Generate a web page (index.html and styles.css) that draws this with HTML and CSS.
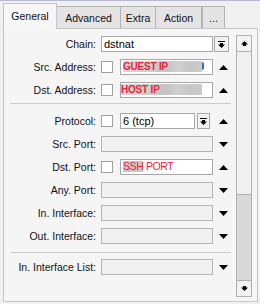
FILE: index.html
```html
<!DOCTYPE html>
<html lang="en">
<head>
<meta charset="UTF-8">
<meta name="viewport" content="width=device-width, initial-scale=1.0">
<title>NAT Rule</title>
<link rel="stylesheet" href="styles.css">
</head>
<body>
<div class="window">
    <div class="tabs">
        <div class="tab tab-general active">General</div>
        <div class="tab tab-advanced">Advanced</div>
        <div class="tab tab-extra">Extra</div>
        <div class="tab tab-action">Action</div>
        <div class="tab tab-more">...</div>
    </div>

    <div class="panel">
        <div class="form">
            <div class="row">
                <span class="label">Chain:</span>
                <div class="ctrl">
                    <div class="field">dstnat</div>
                </div>
                <div class="slot slot-btn">
                    <div class="drop-btn drop-wide">
                        <svg width="7" height="7" viewBox="0 0 7 7"><rect x="0" y="0" width="7" height="1"/><path d="M2 2h3v1.5h2L3.5 7 0 3.5h2z"/></svg>
                    </div>
                </div>
            </div>

            <div class="row">
                <span class="label">Src. Address:</span>
                <div class="ctrl">
                    <span class="check"></span>
                    <div class="field field-mask">
                        <span class="blur blur-guest">GUEST IP</span><span class="tail"></span>
                    </div>
                </div>
                <div class="slot"><svg class="tri" width="9" height="5" viewBox="0 0 9 5"><path d="M0 5L4.5 0 9 5z"/></svg></div>
            </div>

            <div class="row">
                <span class="label">Dst. Address:</span>
                <div class="ctrl">
                    <span class="check"></span>
                    <div class="field field-mask field-flush">
                        <span class="blur blur-host">HOST IP</span>
                    </div>
                </div>
                <div class="slot"><svg class="tri" width="9" height="5" viewBox="0 0 9 5"><path d="M0 5L4.5 0 9 5z"/></svg></div>
            </div>

            <div class="sep"></div>

            <div class="row">
                <span class="label">Protocol:</span>
                <div class="ctrl">
                    <span class="check"></span>
                    <div class="field">6 (tcp)</div>
                    <div class="drop-btn drop-small">
                        <svg width="7" height="7" viewBox="0 0 7 7"><rect x="0" y="0" width="7" height="1"/><path d="M2 2h3v1.5h2L3.5 7 0 3.5h2z"/></svg>
                    </div>
                </div>
                <div class="slot"><svg class="tri" width="9" height="5" viewBox="0 0 9 5"><path d="M0 5L4.5 0 9 5z"/></svg></div>
            </div>

            <div class="row">
                <span class="label">Src. Port:</span>
                <div class="ctrl">
                    <div class="field disabled"></div>
                </div>
                <div class="slot"><svg class="tri" width="9" height="5" viewBox="0 0 9 5"><path d="M0 0h9L4.5 5z"/></svg></div>
            </div>

            <div class="row">
                <span class="label">Dst. Port:</span>
                <div class="ctrl">
                    <span class="check"></span>
                    <div class="field field-mask">
                        <span class="port"><span class="port-hide">SSH</span> PORT</span>
                    </div>
                </div>
                <div class="slot"><svg class="tri" width="9" height="5" viewBox="0 0 9 5"><path d="M0 5L4.5 0 9 5z"/></svg></div>
            </div>

            <div class="row">
                <span class="label">Any. Port:</span>
                <div class="ctrl">
                    <div class="field disabled"></div>
                </div>
                <div class="slot"><svg class="tri" width="9" height="5" viewBox="0 0 9 5"><path d="M0 0h9L4.5 5z"/></svg></div>
            </div>

            <div class="row">
                <span class="label">In. Interface:</span>
                <div class="ctrl">
                    <div class="field disabled"></div>
                </div>
                <div class="slot"><svg class="tri" width="9" height="5" viewBox="0 0 9 5"><path d="M0 0h9L4.5 5z"/></svg></div>
            </div>

            <div class="row">
                <span class="label">Out. Interface:</span>
                <div class="ctrl">
                    <div class="field disabled"></div>
                </div>
                <div class="slot"><svg class="tri" width="9" height="5" viewBox="0 0 9 5"><path d="M0 0h9L4.5 5z"/></svg></div>
            </div>

            <div class="sep sep-low"></div>

            <div class="row">
                <span class="label">In. Interface List:</span>
                <div class="ctrl">
                    <div class="field disabled"></div>
                </div>
                <div class="slot"><svg class="tri" width="9" height="5" viewBox="0 0 9 5"><path d="M0 0h9L4.5 5z"/></svg></div>
            </div>
        </div>

        <div class="scrollbar">
            <div class="sb-btn sb-up">
                <svg width="7" height="5" viewBox="0 0 7 5"><path d="M3.5 0L7 3.5H5V5H2V3.5H0z"/></svg>
            </div>
            <div class="sb-thumb"></div>
            <div class="sb-track"></div>
            <div class="sb-btn sb-down">
                <svg width="7" height="5" viewBox="0 0 7 5"><path d="M2 0h3v1.5h2L3.5 5 0 1.5h2z"/></svg>
            </div>
        </div>
    </div>
</div>
</body>
</html>
```

FILE: styles.css
```css
body {
    margin: 0;
    padding: 0;
    background-color: #f0f0f0;
    font-family: "Liberation Sans", Arial, sans-serif;
    font-size: 10.5px;
    color: #111118;
}
.window {
    height: 304px;
    box-sizing: border-box;
    border-top: 1px solid #b6b8d4;
    overflow: hidden;
}

/* tab strip */
.tabs {
    display: flex;
    align-items: flex-end;
    margin-top: 2px;
    padding-left: 3px;
}
.tab {
    box-sizing: border-box;
    height: 22px;
    padding-top: 5px;
    line-height: 13px;
    text-align: center;
    background-color: #e4e4e4;
    border: 1px solid #b4b4b4;
    border-bottom: none;
    margin-left: -1px;
}
.tab.active {
    position: relative;
    z-index: 1;
    height: 26px;
    padding-top: 6px;
    margin-bottom: -1px;
    margin-left: 0;
    background-color: #f7f7f7;
    border-color: #c4c4c4;
}
.tab-general { width: 54px; }
.tab-advanced { width: 65px; }
.tab-extra { width: 36px; }
.tab-action { width: 47px; }
.tab-more { width: 23px; margin-left: 0; }

/* panel */
.panel {
    display: flex;
    align-items: flex-start;
    box-sizing: border-box;
    height: 274px;
    margin: 0 2px 0 3px;
    padding-right: 5px;
    background-color: #f5f5f5;
    border: 1px solid #c8c8c8;
}
.form {
    flex: 0 0 232px;
    display: flex;
    flex-direction: column;
    gap: 7px;
    padding-top: 7px;
}
.row {
    display: flex;
    align-items: center;
    height: 16px;
}
.label {
    flex: 0 0 92px;
    margin-right: 5px;
    text-align: right;
    white-space: nowrap;
}
.ctrl {
    display: flex;
    width: 112px;
    height: 16px;
}
.check {
    flex: 0 0 12px;
    height: 12px;
    box-sizing: border-box;
    margin: 2px 7px 0 0;
    background-color: #fff;
    border: 1px solid #a0a0a0;
}
.field {
    flex: 1;
    min-width: 0;
    box-sizing: border-box;
    height: 16px;
    padding-left: 2px;
    line-height: 14px;
    font-size: 11px;
    color: #000;
    white-space: nowrap;
    overflow: hidden;
    background-color: #fff;
    border: 1px solid #a8a8a8;
}
.field.disabled {
    background-color: #f0f0f0;
    border-color: #b4b4b4;
}
.field-flush {
    padding-left: 0;
}
.drop-btn {
    box-sizing: border-box;
    height: 16px;
    display: flex;
    align-items: center;
    justify-content: center;
    background-color: #f2f2f2;
    border: 1px solid #a8a8a8;
}
.drop-wide { width: 15px; }
.drop-small {
    width: 13px;
    margin: 0 3px 0 2px;
}
.slot {
    flex: 0 0 18px;
    height: 16px;
    margin-left: 1px;
    display: flex;
    align-items: center;
    justify-content: center;
}
.slot-btn {
    justify-content: flex-start;
}
.tri {
    display: block;
}

/* blurred values */
.blur {
    display: inline-block;
    vertical-align: top;
    height: 11px;
    margin-top: 1px;
    line-height: 11px;
    font-size: 10px;
    font-weight: bold;
    letter-spacing: -0.2px;
    color: #f4213a;
    background: linear-gradient(90deg, #d6d6d6 0%, #cdcdcd 35%, #c3c3c3 55%, #d0d0d0 70%, #c6c6c6 85%, #cbcbcb 100%);
}
.blur-guest { width: 79px; }
.blur-host { width: 81px; }
.tail {
    display: inline-block;
    vertical-align: top;
    width: 2px;
    height: 8px;
    margin-top: 2px;
    background-color: #4262d4;
    border-radius: 0 2px 2px 0;
}
.port {
    display: inline-block;
    vertical-align: top;
    margin-top: 1px;
    line-height: 11px;
    font-size: 10.5px;
    letter-spacing: -0.4px;
    color: #f4213a;
}
.port-hide {
    display: inline-block;
    background-color: #c8c8c8;
}

.sep {
    height: 1px;
    margin: -2px 5px 2px 6px;
    background-color: #cacaca;
}
.sep-low {
    margin-top: 1px;
    margin-bottom: -1px;
}

/* scrollbar */
.scrollbar {
    flex: 0 0 16px;
    height: 262px;
    margin-top: 6px;
    box-sizing: border-box;
    display: flex;
    flex-direction: column;
    background-color: #d9d9d9;
    border: 1px solid #b0b0b0;
}
.sb-btn {
    flex: 0 0 15px;
    display: flex;
    align-items: center;
    justify-content: center;
    background-color: #f2f2f2;
}
.sb-up { border-bottom: 1px solid #b0b0b0; }
.sb-down { border-top: 1px solid #b0b0b0; }
.sb-thumb {
    flex: 0 0 142px;
    background-color: #f0f0f0;
    border-bottom: 1px solid #b0b0b0;
}
.sb-track {
    flex: 1;
}
```
